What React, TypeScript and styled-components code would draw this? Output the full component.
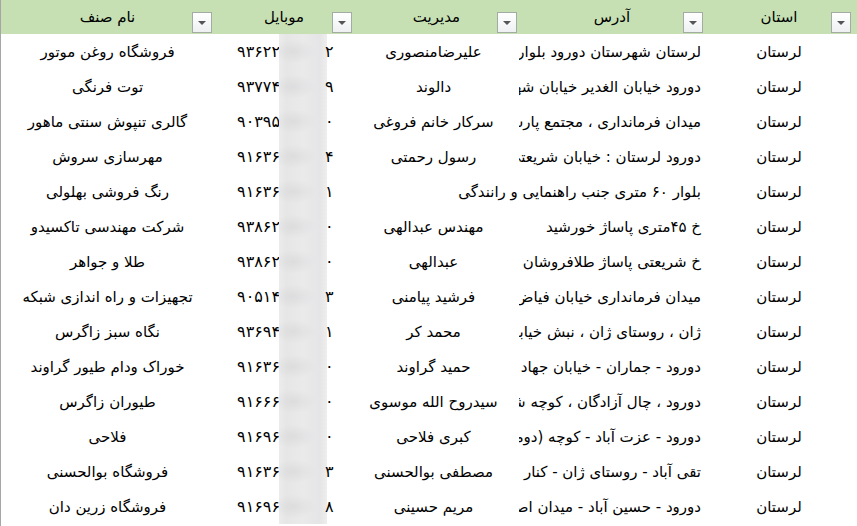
import React from "react";
import styled, { createGlobalStyle } from "styled-components";

const Global = createGlobalStyle`
  html, body { margin: 0; padding: 0; background: #ffffff; }
  #root { width: 857px; height: 526px; }
`;

const COLS = "4px 148px 186px 165px 140px 1fr";

const Sheet = styled.div`
  position: relative;
  width: 857px;
  height: 526px;
  overflow: hidden;
  box-sizing: border-box;
  direction: rtl;
  border-left: 1px solid #a6a6a6;
  background: #ffffff;
  font-family: "DejaVu Sans", "Noto Sans", sans-serif;
  font-size: 15px;
  color: #000000;
`;

const SideMarker = styled.div`
  position: absolute;
  left: -1px;
  top: 302px;
  width: 1px;
  height: 45px;
  background: #217346;
`;

const HeaderRow = styled.div`
  display: grid;
  grid-template-columns: ${COLS};
  height: 34px;
  background: #c6e0b4;
`;

const HeaderCell = styled.div`
  direction: ltr;
  display: grid;
  grid-template-columns: 20px 1fr 20px;
  padding: 0 2px;
  box-sizing: border-box;
  min-width: 0;
`;

const HeaderText = styled.span`
  grid-column: 2;
  direction: rtl;
  align-self: center;
  text-align: center;
  white-space: nowrap;
  padding-bottom: 1px;
`;

const FilterButton = styled.span`
  grid-column: 3;
  align-self: end;
  margin-bottom: 1px;
  width: 20px;
  height: 21px;
  box-sizing: border-box;
  border: 1px solid #a3aca3;
  background: linear-gradient(#ffffff, #eef0f2);
  display: flex;
  align-items: center;
  justify-content: center;
  &::after {
    content: "";
    width: 0;
    height: 0;
    border-left: 4px solid transparent;
    border-right: 4px solid transparent;
    border-top: 4px solid #555555;
    margin-top: 1px;
  }
`;

const Row = styled.div`
  display: grid;
  grid-template-columns: ${COLS};
  height: 35px;
  align-items: center;
`;

const Cell = styled.div<{ $align: "center" | "right"; $span?: number; $padR?: number }>`
  min-width: 0;
  overflow: hidden;
  white-space: nowrap;
  text-align: ${(p) => p.$align};
  padding-right: ${(p) => p.$padR ?? 0}px;
  grid-column: ${(p) => (p.$span ? `span ${p.$span}` : "auto")};
`;

const PhoneCell = styled.div`
  direction: ltr;
  display: flex;
  align-self: stretch;
  align-items: center;
  min-width: 0;
  font-size: 16px;
`;

const PhoneHead = styled.span`
  flex: 0 0 66px;
  text-align: right;
  white-space: nowrap;
  letter-spacing: 1.6px;
  margin-right: -1px;
`;

const PhoneBlur = styled.span`
  flex: 0 0 48px;
  height: 35px;
  background:
    radial-gradient(ellipse 22px 12px at 30% 50%, rgba(200, 200, 205, 0.35), transparent),
    linear-gradient(to right, #ececec, #e6e6e6 15%, #eaeaea 50%, #e5e5e7 85%, #eeeeee);
`;

const PhoneTail = styled.span`
  white-space: nowrap;
  margin-left: -2px;
`;

type Rec = {
  addr: string;
  boss: string;
  head: string;
  tail: string;
  name: string;
  wide?: boolean;
};

const rows: Rec[] = [
  { addr: "لرستان شهرستان دورود بلوار امام خمینی", boss: "علیرضامنصوری", head: "۹۳۶۲۲", tail: "۲", name: "فروشگاه روغن موتور" },
  { addr: "دورود خیابان الغدیر خیابان شهدا", boss: "دالوند", head: "۹۳۷۷۴", tail: "۹", name: "توت فرنگی" },
  { addr: "میدان فرمانداری ، مجتمع پارسیان", boss: "سرکار خانم فروغی", head: "۹۰۳۹۵", tail: "۰", name: "گالری تنپوش سنتی ماهور" },
  { addr: "دورود لرستان : خیابان شریعتی شمالی", boss: "رسول رحمتی", head: "۹۱۶۳۶", tail: "۴", name: "مهرسازی سروش" },
  { addr: "بلوار ۶۰ متری جنب راهنمایی و رانندگی", boss: "", head: "۹۱۶۳۶", tail: "۱", name: "رنگ فروشی بهلولی", wide: true },
  { addr: "خ ۴۵متری پاساژ خورشید", boss: "مهندس عبدالهی", head: "۹۳۸۶۲", tail: "۰", name: "شرکت مهندسی تاکسیدو" },
  { addr: "خ شریعتی پاساژ طلافروشان", boss: "عبدالهی", head: "۹۳۸۶۲", tail: "۰", name: "طلا و جواهر" },
  { addr: "میدان فرمانداری خیابان فیاض بخش", boss: "فرشید پیامنی", head: "۹۰۵۱۴", tail: "۳", name: "تجهیزات و راه اندازی شبکه" },
  { addr: "ژان ، روستای ژان ، نبش خیابان اصلی", boss: "محمد کر", head: "۹۳۶۹۴", tail: "۱", name: "نگاه سبز زاگرس" },
  { addr: "دورود - جماران - خیابان جهاد", boss: "حمید گراوند", head: "۹۱۶۳۶", tail: "۰", name: "خوراک ودام طیور گراوند" },
  { addr: "دورود ، چال آزادگان ، کوچه شهید", boss: "سیدروح الله موسوی", head: "۹۱۶۶۶", tail: "۰", name: "طیوران زاگرس" },
  { addr: "دورود - عزت آباد - کوچه (دوم)", boss: "کبری فلاحی", head: "۹۱۶۹۶", tail: "۰", name: "فلاحی" },
  { addr: "تقی آباد - روستای ژان - کنار جاده", boss: "مصطفی بوالحسنی", head: "۹۱۶۳۶", tail: "۳", name: "فروشگاه بوالحسنی" },
  { addr: "دورود - حسین آباد - میدان اصلی", boss: "مریم حسینی", head: "۹۱۶۹۶", tail: "۸", name: "فروشگاه زرین دان" },
];

const headers = ["استان", "آدرس", "مدیریت", "موبایل", "نام صنف"];

export default function App() {
  return (
    <>
      <Global />
      <Sheet>
        <SideMarker />
        <HeaderRow>
          <div />
          {headers.map((h) => (
            <HeaderCell key={h}>
              <HeaderText>{h}</HeaderText>
              <FilterButton />
            </HeaderCell>
          ))}
        </HeaderRow>
        {rows.map((r, i) => (
          <Row key={i}>
            <div />
            <Cell $align="center">لرستان</Cell>
            <Cell $align="right" $padR={4} $span={r.wide ? 2 : undefined}>
              {r.addr}
            </Cell>
            {!r.wide && (
              <Cell $align="center" $padR={6}>
                {r.boss}
              </Cell>
            )}
            <PhoneCell>
              <PhoneHead>{r.head}</PhoneHead>
              <PhoneBlur />
              <PhoneTail>{r.tail}</PhoneTail>
            </PhoneCell>
            <Cell $align="center">{r.name}</Cell>
          </Row>
        ))}
      </Sheet>
    </>
  );
}
